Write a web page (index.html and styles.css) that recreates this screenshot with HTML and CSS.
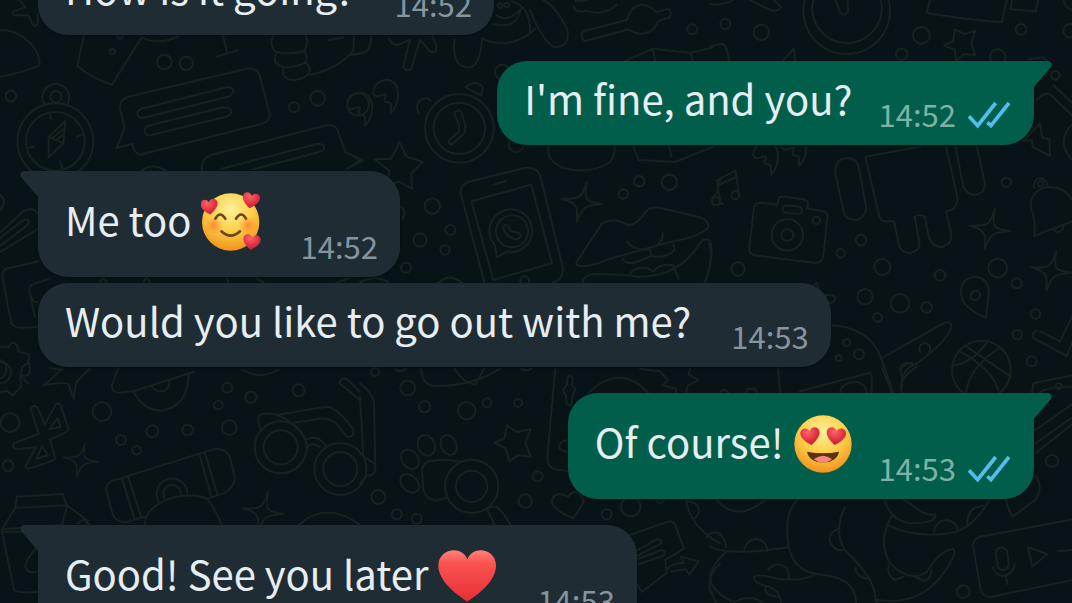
FILE: index.html
```html
<!DOCTYPE html>
<html lang="en">
<head>
    <meta charset="UTF-8">
    <meta name="viewport" content="width=device-width, initial-scale=1.0">
    <title>Chat</title>
    <link rel="stylesheet" href="styles.css">
</head>
<body>
    <!-- wallpaper -->
    <svg class="wallpaper" viewBox="0 0 3216 1809" preserveAspectRatio="xMidYMid slice" aria-hidden="true">
        <defs>
            <path id="sparkle" d="M14-60Q8-14 14-10Q22 2 60 6Q16 10 8 18Q-4 28-16 60Q-12 22-20 12Q-28-2-62-10Q-20-8-8-16Q4-26 14-60Z"/>
            <path id="star" d="M-2-74L20-30L68-14L34 20L36 66L-4 44L-40 58L-32 12L-76-22L-26-24Z"/>
            <path id="quote" d="M-38-2Q-36-38 4-40Q38-36 36 10Q34 38 16 58L14 30Q10 26 0 26Q-8 22-2 12Q6 2-8 4Q-36 16-38-2Z"/>
        </defs>

        <!-- top left -->
        <g>
            <path d="M60 0L75 22L45 32Q34 38 42 46L85 46L98 74Q108 82 114 70L112 40"/>
            <path d="M0 92Q30 86 70 112Q122 150 118 196Q60 220 0 230"/>
            <path d="M252 105L232 198Q280 238 336 254L425 112Q480 138 536 108"/>
            <circle cx="337" cy="155" r="8"/><circle cx="360" cy="108" r="8"/>
            <circle cx="493" cy="186" r="22"/><circle cx="559" cy="190" r="20"/>
            <path d="M668 105L682 160M650 170L714 150"/>
            <path d="M820 105Q804 140 830 156Q870 164 912 154Q928 130 916 105M830 156Q812 190 850 202Q890 202 916 188Q924 168 912 154M850 202Q842 238 880 240Q926 236 928 210Q930 196 916 188M930 224Q1010 210 1060 152L1062 105M985 120L1030 112M1060 165L1090 158"/>
            <circle cx="33" cy="288" r="16"/>
            <circle cx="166" cy="424" r="114"/><circle cx="166" cy="424" r="88"/>
            <path d="M133 312A40 40 0 1 1 202 312"/><circle cx="168" cy="290" r="17"/>
            <path d="M196 364L146 410L146 472L190 430ZM146 410L190 430M160 412L190 388M170 418L190 404M148 338L153 356M230 410L250 402M80 444L102 440M180 484L186 504"/>
            <path d="M385 290L740 206Q768 202 778 222L808 340Q812 362 790 370L420 464Q404 462 396 432L350 444L374 385L360 325Q358 300 385 290Z"/>
            <path d="M425 326L680 262Q700 260 700 274Q698 286 684 290L428 354Q412 354 412 340Q414 330 425 326ZM450 376L670 322Q694 322 694 338Q690 348 678 350L450 406Q434 406 434 392Q436 380 450 376Z"/>
            <path d="M606 515Q600 478 630 466L980 376Q1004 372 1012 390L1036 456L1090 482L1040 506M665 506L950 432Q974 430 972 446Q968 454 950 458L760 508"/>
            <circle cx="882" cy="322" r="15"/><circle cx="953" cy="295" r="22"/><circle cx="1074" cy="313" r="33"/>
            <path d="M420 515Q460 484 500 515"/>
        </g>

        <!-- top middle -->
        <g transform="translate(1050)">
            <path d="M0 165L40 158Q64 152 64 105M118 115Q124 140 150 132L180 118L160 200Q170 220 184 206L210 118L240 155Q260 160 260 140L246 105"/>
            <path d="M314 120Q304 196 350 202Q390 206 396 120M396 115Q470 150 540 100M450 10a7 7 0 1 0 1 0M470 8a7 7 0 1 0 1 0M430 72Q500 90 512 28Q470 70 440 46M484 4Q544 20 540 100L556 86M540 30Q580 130 615 142Q660 140 652 90Q620 20 580 0"/>
            <path d="M672 20Q674 40 710 32Q760 50 800 14M700 94Q688 108 704 124L836 88Q870 114 910 88L926 62L960 52Q966 34 956 26L918 36Q880-4 844 30L830 60Z"/>
            <path d="M676 4L710 0"/>
            <circle cx="1027" cy="88" r="15"/>
            <path d="M825 183L908 146L1022 158L1090 142M908 146L915 180M1022 158L1028 183"/>
            <circle cx="457" cy="216" r="22"/><circle cx="498" cy="434" r="22"/>
            <use href="#quote" transform="translate(108 280)"/><use href="#quote" transform="translate(30 318)"/>
            <circle cx="328" cy="385" r="103"/><circle cx="328" cy="385" r="77"/>
            <path d="M322 332Q312 334 314 344L328 378L326 396L298 420Q294 430 304 434L344 400L346 376L334 336Q328 328 322 332ZM206 340Q192 306 220 296Q240 294 242 304M346 262Q380 236 398 262L394 286Z"/>
            <use href="#star" transform="translate(150 500)"/>
            <path d="M0 462L30 482L0 500"/>
            <path d="M596 435Q586 480 640 504Q720 526 780 486Q796 466 794 435M848 435L866 480L975 486L1090 440M956 435L964 470"/>
            <circle cx="868" cy="544" r="16"/><circle cx="958" cy="546" r="23"/><circle cx="820" cy="582" r="14"/>
        </g>

        <!-- top right -->
        <g transform="translate(2130)">
            <path d="M0 12Q40 18 70 0M120 0L180 30Q204 38 212 20L190 0"/>
            <circle cx="46" cy="72" r="15"/><circle cx="154" cy="97" r="23"/>
            <path d="M284 0A130 130 0 1 0 536 0M310 0A104 104 0 1 0 512 0M376 0L390 36Q400 52 414 36L412 0M660 0L650 38Q740 56 876 66L890 0M906 0L902 28L978 34L984 0M1062 0Q1062 20 1086 30"/>
            <path d="M0 138L36 132Q50 130 56 180M220 180L252 146L255 180"/>
            <circle cx="575" cy="163" r="17"/><circle cx="634" cy="106" r="25"/><circle cx="933" cy="88" r="16"/><circle cx="1080" cy="92" r="20"/>
            <path d="M734 88L764 102L796 92L784 130L796 166L762 162L738 184L734 148L702 136L730 124Z"/>
            <path d="M842 180A23 23 0 1 1 884 180M955 178L1000 172L1012 184"/>
            <circle cx="1036" cy="226" r="13"/>
            <path d="M980 300Q1010 270 1026 288L1090 350M1030 256L1090 312M940 424L990 370L996 412L1018 418L1020 468L968 440L966 420ZM1090 370Q1034 420 1086 480"/>
            <use href="#quote" transform="translate(168 466)"/><use href="#quote" transform="translate(252 440)"/>
            <path d="M20 542L76 512L88 588M24 556L80 530M20 542L30 600"/>
            <circle cx="76" cy="586" r="12"/><circle cx="18" cy="604" r="12"/>
            <path d="M376 520Q376 476 410 474Q440 474 446 500L468 620Q470 650 440 660Q408 662 402 640ZM466 470Q540 456 630 440M466 470L508 650Q514 666 534 664L552 664L568 740Q578 762 604 758Q632 750 628 726L614 650Q628 640 644 650L658 716Q674 746 700 740Q726 730 724 706L708 634Q744 630 742 590L708 440M736 436L760 560Q776 590 802 584Q828 574 824 548L800 436"/>
        </g>

        <!-- left edge -->
        <g transform="translate(0 510)">
            <path d="M0 120Q24 96 0 74M0 188L70 124Q100 108 112 130M0 204L70 150Q92 144 84 164L0 228M0 246L112 178M115 274L20 296Q2 304 8 324L34 460Q44 480 112 470M150 326L96 344Q84 352 90 372Q100 400 112 396M90 372L104 440"/>
            <path d="M0 530L26 532L32 520Q46 514 52 528L56 546L84 552Q92 566 84 580L66 590L62 620L84 640M0 575A32 32 0 0 1 0 640"/>
            <path d="M300 336L310 322L320 336M430 336L440 320L450 336M680 322L684 338M770 324L790 338M1010 338L1050 324"/>
        </g>

        <!-- centre -->
        <g transform="translate(1080 450)">
            <circle cx="217" cy="168" r="23"/><circle cx="180" cy="270" r="20"/><circle cx="271" cy="240" r="15"/><circle cx="255" cy="300" r="14"/><circle cx="138" cy="353" r="15"/><circle cx="494" cy="392" r="13"/>
            <path d="M122 170Q140 180 128 206M0 396Q50 374 84 396M234 400Q270 366 306 400"/>
            <path d="M374 400L302 130Q300 106 324 96L494 54Q530 50 540 76L608 350Q612 390 580 396"/>
            <path d="M334 154L514 104L576 340L400 390ZM400 104L436 94"/>
            <path d="M410 322L404 284A64 64 0 1 1 440 305Z"/><circle cx="456" cy="244" r="48"/>
            <path d="M430 228Q444 218 450 242Q464 244 482 252Q484 268 466 268Q430 256 430 228Z"/>
            <use href="#sparkle" transform="translate(666 156)"/>
            <circle cx="790" cy="132" r="14"/><circle cx="838" cy="94" r="15"/><circle cx="928" cy="97" r="23"/>
            <path d="M650 336L726 220Q750 208 774 212L806 226Q830 226 858 184Q874 166 910 176L1020 202Q1048 212 1046 232Q1020 260 930 276L750 326Q690 352 660 348Q646 346 650 336ZM800 276Q820 300 868 300M908 250Q910 270 896 280M788 326Q800 346 830 336L874 318L868 296M874 318Q920 326 944 300L940 282M668 400Q668 376 700 372Q780 372 838 380Q960 380 1020 278Q1040 258 1052 276Q1062 330 1034 400M812 372Q820 350 860 354L880 364Q900 338 940 346L956 386"/>
            <path d="M1080 90L1070 130Q1046 150 1064 166L1090 160"/>
        </g>

        <!-- right -->
        <g transform="translate(2130 450)">
            <path d="M-4 280Q8 310 0 340M152 158L202 164L206 146Q210 138 226 140L280 148Q294 150 294 164L292 176L334 182Q356 186 352 204L340 316Q336 342 310 338L136 316Q114 312 118 290L132 172Q136 158 152 158Z"/>
            <rect x="218" y="168" width="58" height="22" rx="10" transform="rotate(5 247 179)"/>
            <circle cx="232" cy="255" r="47"/><circle cx="232" cy="255" r="18"/><circle cx="319" cy="211" r="11"/>
            <circle cx="84" cy="357" r="20"/><circle cx="392" cy="310" r="13"/><circle cx="453" cy="270" r="16"/><circle cx="517" cy="351" r="24"/><circle cx="690" cy="376" r="16"/><circle cx="465" cy="440" r="23"/><circle cx="570" cy="460" r="28"/><circle cx="650" cy="472" r="16"/><circle cx="503" cy="502" r="13"/><circle cx="889" cy="97" r="14"/><circle cx="863" cy="354" r="28"/><circle cx="920" cy="400" r="15"/><circle cx="977" cy="492" r="14"/><circle cx="922" cy="554" r="14"/><circle cx="965" cy="634" r="15"/>
            <use href="#sparkle" transform="translate(840 237)"/><use href="#sparkle" transform="translate(1025 362)"/>
            <path d="M974 114A20 20 0 1 1 1012 106M1086 150Q1060 106 1010 112Q964 120 962 170Q980 220 972 258L1086 214M1030 240Q1056 256 1062 224"/><circle cx="992" cy="102" r="8"/>
            <path d="M828 504Q754 470 754 434A42 42 0 1 1 836 430Z"/><circle cx="796" cy="436" r="14"/>
            <path d="M306 410L320 398L330 424M346 436Q380 430 374 450Q366 464 356 456"/>
            <path d="M360 526Q480 530 516 630L550 730M512 626L700 520Q724 510 724 530Q710 576 620 640Q570 660 576 710M568 660Q580 630 606 642M632 606A16 16 0 1 1 658 604"/>
            <circle cx="410" cy="578" r="11"/><circle cx="447" cy="613" r="15"/><circle cx="386" cy="624" r="9"/>
            <circle cx="814" cy="660" r="88"/>
            <path d="M750 604Q850 660 864 720M868 594Q780 650 768 726M728 646Q790 640 834 572M770 590L902 680"/>
            <path d="M980 542Q966 548 970 564L1070 618L1090 570M990 544L1050 574L1086 500"/>
        </g>

        <!-- bottom left -->
        <g transform="translate(0 1080)">
            <path d="M0 0A30 30 0 0 1 0 56M84 0Q94 30 86 44L60 50L64 80L38 106L20 92L0 96"/>
            <path d="M150 24L186 30M130 76Q170 46 186 24M130 76Q200 64 206 74L222 118Q224 70 236 58L270 26"/>
            <path d="M354 24L336 76Q334 98 356 98L400 94L580 36M400 94Q430 152 484 152Q564 140 566 44M454 78Q470 100 496 92Q510 80 508 60M728 30Q780 60 834 30"/>
            <circle cx="682" cy="83" r="15"/><circle cx="655" cy="135" r="13"/><circle cx="753" cy="112" r="17"/><circle cx="896" cy="91" r="18"/><circle cx="306" cy="155" r="28"/><circle cx="30" cy="188" r="28"/><circle cx="457" cy="214" r="18"/><circle cx="363" cy="240" r="15"/><circle cx="410" cy="271" r="13"/><circle cx="563" cy="210" r="16"/><circle cx="688" cy="203" r="22"/><circle cx="24" cy="317" r="16"/>
            <path d="M92 146Q104 130 114 146L134 194L168 132Q176 126 182 136L206 208Q206 216 150 238L166 296Q160 304 84 326Q72 324 80 312L108 262L54 268Q36 266 40 250L116 222ZM172 174L148 208L182 200ZM126 258L110 296L144 286Z"/>
            <use href="#sparkle" transform="translate(243 300) scale(.84)"/><use href="#sparkle" transform="translate(790 455)"/>
            <path d="M352 358L640 268Q676 262 690 292L704 350Q706 384 670 400L624 416M352 358Q314 364 320 396L336 456Q346 490 380 486L434 470M366 356L404 478M384 350L424 472M598 282L634 410M614 276L652 404M476 424A46 46 0 1 1 562 404M494 414A26 26 0 1 1 542 404M434 495Q434 440 520 412Q590 400 620 416Q640 436 666 495"/>
            <circle cx="842" cy="262" r="78"/><circle cx="842" cy="262" r="51"/><circle cx="1021" cy="327" r="78"/><circle cx="1021" cy="327" r="51"/>
            <path d="M784 210Q770 184 776 168Q790 156 830 164L980 140Q1010 140 1060 208Q1064 234 1040 230L1010 192Q990 174 960 176L880 188M830 164Q890 190 916 240Q950 220 976 256M920 270Q930 240 960 262M1080 96L1040 56Q1020 54 1018 70L1080 120"/>
            <path d="M50 410L188 402L200 436L46 444ZM46 444L6 508L186 495L202 436L264 484M6 515L42 690Q60 700 112 696M4 515L112 515M232 490L252 478L268 495M112 560Q76 600 76 620Q84 644 112 634M896 495Q980 420 1080 495"/>
        </g>

        <!-- bottom middle -->
        <g transform="translate(1080 1080)">
            <circle cx="45" cy="36" r="12"/><circle cx="143" cy="84" r="22"/><circle cx="194" cy="140" r="17"/><circle cx="320" cy="152" r="26"/><circle cx="381" cy="128" r="13"/><circle cx="474" cy="129" r="12"/><circle cx="533" cy="349" r="15"/><circle cx="496" cy="423" r="20"/><circle cx="55" cy="411" r="21"/><circle cx="110" cy="463" r="15"/><circle cx="170" cy="476" r="15"/><circle cx="740" cy="463" r="15"/><circle cx="812" cy="440" r="29"/>
            <path d="M104 26Q120 40 138 26M184 26Q184 78 230 78Q340 78 420 26M284 26Q310 70 346 74L372 26M484 26Q498 36 514 26"/>
            <path d="M0 70Q40 100 42 130L46 330Q40 348 22 346L0 370M0 112L10 290M0 280L46 314"/>
            <path d="M440 196L470 216L512 208L496 248L512 290L474 286L448 304L438 266L404 248L434 234Z"/>
            <ellipse cx="199" cy="256" rx="25" ry="32" transform="rotate(-25 199 256)"/><ellipse cx="266" cy="255" rx="23" ry="31" transform="rotate(-25 266 255)"/><ellipse cx="150" cy="298" rx="24" ry="32" transform="rotate(-35 150 298)"/><ellipse cx="149" cy="370" rx="23" ry="32" transform="rotate(-45 149 370)"/>
            <path d="M296 304Q250 294 206 304Q180 314 188 350L190 390Q200 424 236 420L262 412"/>
            <circle cx="335" cy="379" r="80"/><circle cx="335" cy="379" r="47"/>
            <path d="M382 450L404 495M402 440Q420 440 452 495M382 450Q388 438 402 440"/>
            <path d="M586 26L562 290Q560 330 600 330L624 334M622 56Q630 36 638 56L636 76Q654 88 638 104L634 136L620 134L618 104Q600 90 620 76ZM620 240Q592 246 600 268L622 276M684 100Q780 6 866 100"/>
            <path d="M640 474Q576 450 576 422Q580 398 610 404L624 410Q650 380 668 416Q680 420 640 474Z"/>
            <path d="M840 26L900 34L924 60L908 76L946 86L950 98M990 26L986 44L1016 60L984 76L978 98"/>
            <path d="M800 528L926 484Q940 484 946 496L972 566L916 600L920 638L846 696L828 670M830 572L890 538Q906 536 904 550L830 588M830 598L904 570Q920 572 912 586L838 612M920 630Q930 610 970 608L962 590L1016 604L988 644L978 628L934 634"/>
            <path d="M888 420Q900 436 912 420M978 420Q990 500 1080 550M984 424Q1020 428 1016 460Q1004 480 996 474M1040 532Q1050 512 1080 518M1080 610Q1040 650 1050 690L1070 729"/>
        </g>

        <!-- bottom right -->
        <g transform="translate(2130 1080)">
            <path d="M204 24L210 98M270 94L480 38Q488 40 484 96M390 98Q394 70 430 66Q468 66 470 98M30 96L44 88L56 98M108 98L114 86L134 86L142 98M516 24L546 98M576 50Q562 16 606 8M576 98Q560 60 620 20M970 70L1090 46M970 70L966 98M1090 80Q1006 80 990 98"/>
            <circle cx="1046" cy="78" r="9"/><circle cx="1026" cy="303" r="18"/><circle cx="760" cy="695" r="19"/>
            <path d="M976 210L1090 130M976 250L1090 170M976 280L1090 190M976 348Q1002 380 976 420L908 470Q894 450 888 420"/>
            <path d="M20 420Q80 490 166 420M262 420Q220 460 236 560Q250 630 318 642Q440 650 438 729M0 520Q40 510 48 560M0 560Q60 590 232 562M102 578Q104 540 140 536Q172 544 172 574M48 576Q-20 640 10 680Q30 710 72 726Q120 700 160 729M318 642Q280 666 200 656Q150 640 132 650Q130 670 176 680Q210 690 214 729M174 630Q200 600 230 624Q238 640 236 656M168 680Q160 690 178 706L210 712"/>
            <path d="M404 444Q370 510 404 570Q500 660 496 720L500 729M386 506Q350 520 362 550Q380 576 400 570M436 622Q440 656 480 656M524 420Q540 480 600 490Q680 490 676 464Q640 468 600 430L580 420M548 464Q500 540 540 610Q600 670 650 636Q690 570 730 566Q744 580 700 640Q630 740 500 720M536 616Q530 650 556 660L580 650M616 650Q660 680 664 630M530 494Q620 540 740 516Q800 490 838 420M672 516Q678 480 714 480Q744 490 744 514M772 494Q770 440 820 438"/>
            <path d="M1090 478L810 530Q786 540 790 560L812 690Q820 714 846 710L1090 660"/>
            <rect x="860" y="562" width="34" height="68" rx="17" transform="rotate(-8 877 596)"/>
            <path d="M848 622Q860 650 884 648Q910 640 914 612M888 648L892 672M954 562L1012 582L966 620ZM1044 574L1090 570"/>
        </g>
    </svg>

    <main class="chat">
        <div class="message incoming">
            <p>How is it going?</p>
            <time>14:52</time>
        </div>

        <div class="message outgoing tail">
            <p>I'm fine, and you?</p>
            <time>14:52</time>
            <svg class="ticks" viewBox="0 0 126 84" role="img" aria-label="Read"><path d="M3 46L29 74L83 6M58 64L69 74L123 6"/></svg>
        </div>

        <div class="message incoming tail">
            <p class="with-emoji">Me too <svg class="emoji" viewBox="33 21 180 180" role="img" aria-label="smiling face with hearts">
                <defs>
                    <radialGradient id="face" cx=".5" cy=".28" r=".74">
                        <stop offset="0" stop-color="#fff09a"/>
                        <stop offset=".5" stop-color="#fdd04a"/>
                        <stop offset="1" stop-color="#f0901a"/>
                    </radialGradient>
                    <radialGradient id="blush">
                        <stop offset="0" stop-color="#f9762f" stop-opacity=".75"/>
                        <stop offset="1" stop-color="#f9862f" stop-opacity="0"/>
                    </radialGradient>
                    <radialGradient id="love" cx=".4" cy=".25" r=".8">
                        <stop offset="0" stop-color="#f9656a"/>
                        <stop offset=".6" stop-color="#e22f3f"/>
                        <stop offset="1" stop-color="#b81c32"/>
                    </radialGradient>
                    <path id="heart" d="M0 25C-12 17-27 4-26-9C-25-22-6-27 0-12C6-27 25-22 26-9C27 4 12 17 0 25Z"/>
                </defs>
                <circle cx="122" cy="111" r="86" fill="url(#face)"/>
                <circle cx="72" cy="121" r="28" fill="url(#blush)"/>
                <circle cx="174" cy="121" r="28" fill="url(#blush)"/>
                <g fill="none" stroke="#6b481a" stroke-width="8" stroke-linecap="round">
                    <path d="M76 101Q90 76 106 101M138 101Q154 76 168 101"/>
                    <path d="M94 139Q122 165 150 139"/>
                </g>
                <g fill="url(#love)">
                    <use href="#heart" transform="translate(58 64) rotate(-8)"/>
                    <use href="#heart" transform="translate(183 45) rotate(10)"/>
                    <use href="#heart" transform="translate(185 170) rotate(8)"/>
                </g>
            </svg></p>
            <time>14:52</time>
        </div>

        <div class="message incoming">
            <p>Would you like to go out with me?</p>
            <time>14:53</time>
        </div>

        <div class="message outgoing tail">
            <p class="with-emoji">Of course! <svg class="emoji" viewBox="22 27 180 180" role="img" aria-label="smiling face with heart eyes">
                <circle cx="112" cy="117" r="86" fill="url(#face)"/>
                <g fill="url(#love)">
                    <use href="#heart" transform="translate(74 92) rotate(-8) scale(1.12)"/>
                    <use href="#heart" transform="translate(151 92) rotate(8) scale(1.12)"/>
                </g>
                <path fill="#5d2f16" d="M64 140Q112 150 160 140Q154 171 112 172Q70 171 64 140Z"/>
                <path fill="#f58a84" d="M84 163Q112 142 140 163Q128 172 112 172Q96 172 84 163Z"/>
            </svg></p>
            <time>14:53</time>
            <svg class="ticks" viewBox="0 0 126 84" role="img" aria-label="Read"><path d="M3 46L29 74L83 6M58 64L69 74L123 6"/></svg>
        </div>

        <div class="message incoming tail">
            <p class="with-emoji">Good! See you later <svg class="emoji" viewBox="26 18 180 180" role="img" aria-label="red heart">
                <defs>
                    <linearGradient id="red" x2="0" y2="1">
                        <stop offset="0" stop-color="#ff8379"/>
                        <stop offset=".25" stop-color="#fb5350"/>
                        <stop offset="1" stop-color="#e62f36"/>
                    </linearGradient>
                </defs>
                <path fill="url(#red)" d="M117 184C100 174 30 128 30 77C30 26 100 14 117 58C134 14 203 26 203 77C203 128 134 174 117 184Z"/>
            </svg></p>
            <time>14:53</time>
        </div>
    </main>
</body>
</html>
```
FILE: styles.css
```css
* {
    box-sizing: border-box;
}
body {
    margin: 0;
    height: 100vh;
    overflow: hidden;
    position: relative;
    background-color: #081318;
    color: #e6eef3;
    font-family: "Noto Sans CJK SC", sans-serif;
    font-size: 40px;
}
.wallpaper {
    position: absolute;
    top: 0;
    left: 0;
    width: 100%;
    height: 100%;
    fill: none;
    stroke: #16221f;
    stroke-width: 6;
    stroke-linecap: round;
    stroke-linejoin: round;
}

/* messages */
.chat {
    display: flex;
    flex-direction: column;
    gap: 6px;
    padding: 0 38px;
    margin-top: -49px; /* scrolled up past the first bubble */
}
.message {
    position: relative;
    display: flex;
    align-items: flex-end;
    padding: 7px 22px 13px 27px;
    border-radius: 30px;
    box-shadow: 0 1px 2px rgba(0, 0, 0, 0.4);
}
.incoming {
    align-self: flex-start;
    background-color: #202c33;
}
.outgoing {
    align-self: flex-end;
    padding-right: 24px;
    background-color: #005e4b;
}
.message p {
    margin: 0 0 4px;
    line-height: 60px;
    white-space: nowrap;
}
.message p.with-emoji {
    line-height: 82px;
}
.message time {
    margin-left: 40px;
    font-size: 31px;
    line-height: 36px;
    color: #8495a0;
}
.outgoing time {
    margin-left: 26px;
    color: #7fb2a5;
}

/* first bubble of a group */
.tail {
    margin-top: 20px;
}
.tail::before {
    content: "";
    position: absolute;
    top: 0;
    width: 19px;
    height: 27px;
    background-color: inherit;
}
.incoming.tail {
    border-top-left-radius: 0;
}
.incoming.tail::before {
    left: -18px;
    clip-path: path("M19 0H4Q-1 1 1 6L19 27Z");
}
.outgoing.tail {
    border-top-right-radius: 0;
}
.outgoing.tail::before {
    right: -18px;
    clip-path: path("M0 0H15Q20 1 18 6L0 27Z");
}

.emoji {
    width: 60px;
    height: 60px;
    vertical-align: -16px;
}
.ticks {
    width: 42px;
    height: 28px;
    margin: 0 0 3px 12px;
    fill: none;
    stroke: #53bdeb;
    stroke-width: 11;
}
```
